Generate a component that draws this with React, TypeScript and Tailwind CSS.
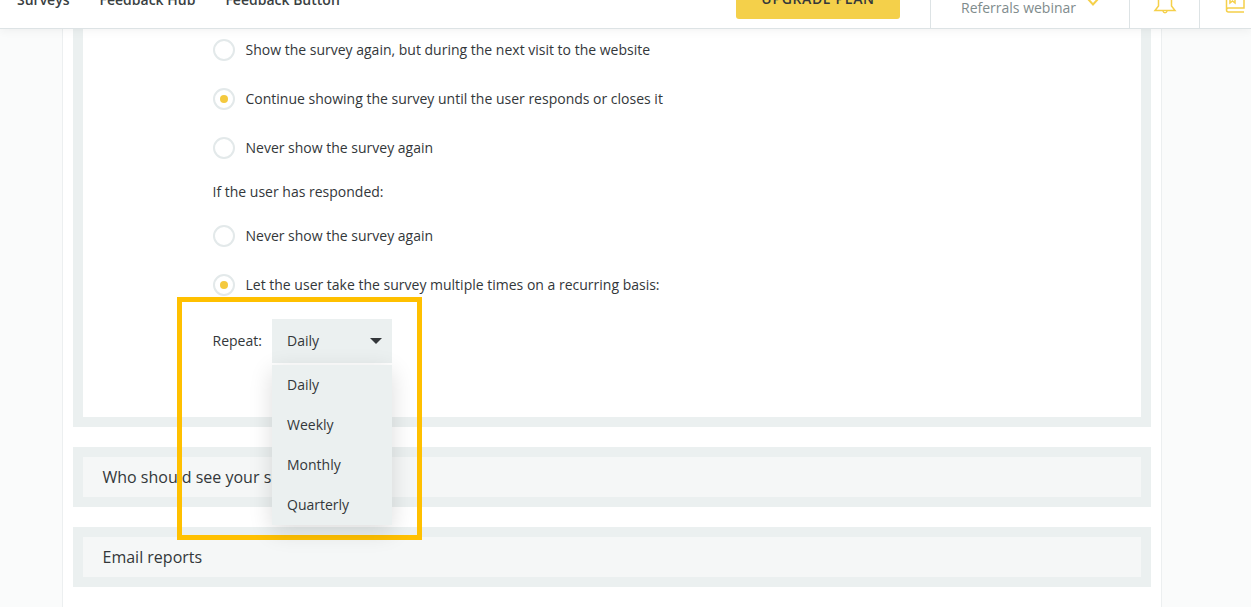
import React from "react";

function Radio({ on, label }: { on?: boolean; label: string }) {
  return (
    <div className="flex items-center gap-[10.5px] h-[22px]">
      <span className="flex items-center justify-center w-[22px] h-[22px] rounded-full border-2 border-[#e3e9ea] bg-white">
        {on && <span className="block w-2 h-2 rounded-full bg-[#f4c93e]" />}
      </span>
      <span>{label}</span>
    </div>
  );
}

export default function App() {
  return (
    <div className="relative h-[607px] overflow-hidden bg-[#fafbfb] text-[14px] leading-5 text-[#33373a] [font-family:'Open_Sans',sans-serif]">
      <header className="relative z-10 flex items-end h-[29px] overflow-hidden bg-white border-b border-[#dde3e5] shadow-[0_2px_10px_rgba(0,0,0,0.05)]">
        <nav className="flex items-end gap-[30px] pl-[17px] mb-[18px] font-semibold text-[#3a3f42]">
          <span>Surveys</span>
          <span>Feedback Hub</span>
          <span>Feedback Button</span>
        </nav>
        <div className="ml-auto flex items-end h-full">
          <div className="flex items-center justify-center w-[164px] h-[38px] mb-[9px] rounded-[3px] bg-[#f4d04a] font-semibold tracking-[0.65px] text-[#33373a]">
            <span className="-mt-[2px]">UPGRADE PLAN</span>
          </div>
          <div className="flex items-center h-full ml-[30px] w-[199px] pl-[30px] border-l border-[#dde3e5] text-[#7f8c8d]">
            <span className="-mt-[13px]">Referrals webinar</span>
            <svg className="ml-[11px] -mt-[28px]" width="12" height="14" viewBox="0 0 12 14" fill="none" stroke="#f5d04a" strokeWidth="2">
              <path d="M1 6l5 5.500 5-5.500" />
            </svg>
          </div>
          <div className="flex items-center justify-center h-full w-[70px] border-l border-[#dde3e5]">
            <svg className="-mt-[25px]" width="24" height="32" viewBox="0 0 24 32" fill="none" stroke="#f5d04a" strokeWidth="1.5">
              <path d="M12 3c-4.500 0-6.500 4-6.500 9v8L2 24.500h20L18.500 20v-8c0-5-2-9-6.500-9z" />
              <path d="M10 25c.2 1.200 1 1.800 2 1.800s1.800-.6 2-1.800" />
            </svg>
          </div>
          <div className="flex items-center h-full w-[52px] pl-[25px] border-l border-[#dde3e5]">
            <svg className="-mt-[30px] shrink-0" width="20" height="30" viewBox="0 0 20 30" fill="none" stroke="#f5d04a" strokeWidth="1.5">
              <path d="M1.500 26V6c0-1 1-2 2-2h15.500v20H3.500c-1 0-2 1-2 2s1 2 2 2h15.500" />
              <path d="M5 4v15l2.500-2 2.500 2V4" />
            </svg>
          </div>
        </div>
      </header>

      <main className="w-[1100px] h-[578px] ml-[62px] px-[10px] bg-white border-x border-[#eceff0]">
        <section className="border-[10px] border-t-0 border-[#ebf0f0] bg-white h-[398px] pt-[10px] pl-[130px]">
          <div className="flex flex-col gap-[27px]">
            <Radio label="Show the survey again, but during the next visit to the website" />
            <Radio on label="Continue showing the survey until the user responds or closes it" />
            <Radio label="Never show the survey again" />
          </div>
          <p className="mt-[23px] mb-[23px] -ml-[0.5px]">If the user has responded:</p>
          <div className="flex flex-col gap-[27px]">
            <Radio label="Never show the survey again" />
            <Radio on label="Let the user take the survey multiple times on a recurring basis:" />
          </div>
          <div className="relative flex items-center mt-[23px]">
            <span className="w-[59.5px] -ml-[0.5px]">Repeat:</span>
            <div className="flex items-center justify-between w-[120px] h-[44px] pl-[15px] pr-[10px] bg-[#ebf0f0]">
              <span>Daily</span>
              <span className="w-0 h-0 border-x-[6px] border-t-[6px] border-x-transparent border-t-[#33373a]" />
            </div>
            <ul className="absolute z-30 left-[59px] top-[46px] w-[120px] bg-[#ebf0f0] shadow-[0_6px_22px_rgba(0,0,0,0.14)]">
              {["Daily", "Weekly", "Monthly", "Quarterly"].map((o) => (
                <li key={o} className="flex items-center h-10 pl-[15px]">{o}</li>
              ))}
            </ul>
          </div>
        </section>

        <section className="mt-5 border-[10px] border-[#ebf0f0] bg-[#f5f7f7] h-[60px] flex items-center pl-[19.5px] text-[16px]">
          Who should see your survey?
        </section>
        <section className="mt-5 border-[10px] border-[#ebf0f0] bg-[#f5f7f7] h-[60px] flex items-center pl-[19.5px] text-[16px]">
          Email reports
        </section>
      </main>

      <div className="absolute z-20 left-[177px] top-[297px] w-[245px] h-[243px] border-[5px] border-[#ffc000]" />
    </div>
  );
}
